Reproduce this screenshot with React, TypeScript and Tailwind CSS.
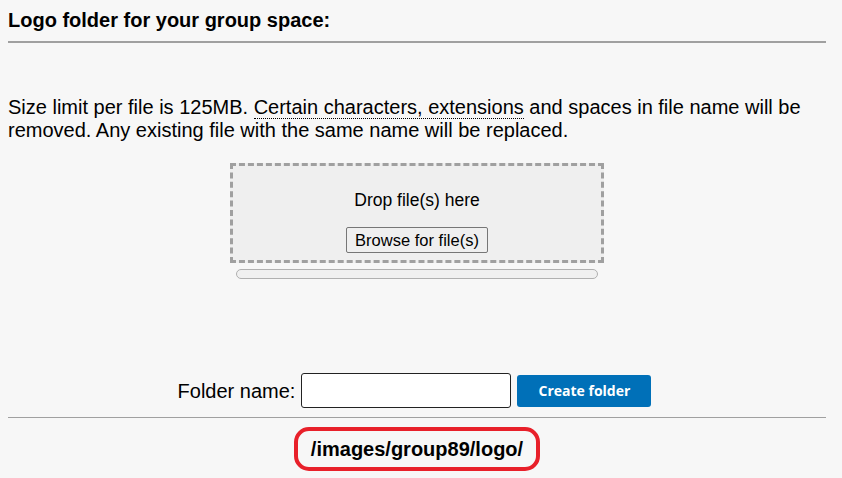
import React from "react";

export default function App() {
  return (
    <div className="min-h-[478px] w-[842px] bg-[#f7f7f7] text-black font-['Liberation_Sans',Arial,sans-serif]">
      <div className="ml-[8px] w-[818px]">
        <div className="pt-[9px] pb-[9px] text-[20px] font-bold leading-[23px]">Logo folder for your group space:</div>
        <div className="h-[2px] bg-[#a0a0a0]" />
        <p className="mt-[53px] text-[20px] leading-[23px]">
          Size limit per file is 125MB.{" "}
          <span className="border-b border-dotted border-black">Certain characters, extensions</span> and spaces in file name will be removed. Any existing file with the same name will be replaced.
        </p>
        <div className="mt-[21px] flex flex-col items-center">
          <div className="w-[374px] h-[100px] border-[3px] border-dashed border-[#a0a0a0] bg-[#efefef] flex flex-col items-center">
            <div className="mt-[24px] text-[17.5px] leading-[20px]">Drop file(s) here</div>
            <button className="mt-[17px] px-[8px] h-[26px] border border-[#767676] rounded-[2px] bg-[#efefef] text-[16.5px] leading-[20px] font-['Liberation_Sans',Arial,sans-serif]">
              Browse for file(s)
            </button>
          </div>
          <div className="mt-[6px] w-[362px] h-[10px] rounded-full border border-[#b0b0b0] bg-[#f0f0f0]" />
        </div>
        <div className="mt-[94px] pr-[5px] flex items-center justify-center gap-[6px]">
          <span className="text-[20px] leading-[22px]">Folder name:</span>
          <input className="w-[210px] h-[35px] border border-[#222] rounded-[3px] bg-white" />
          <button className="w-[134px] h-[32px] rounded-[3px] bg-[#0070b8] text-white text-[14px] font-bold font-['Open_Sans',sans-serif]">
            Create folder
          </button>
        </div>
        <div className="mt-[9px] h-[1px] bg-[#a0a0a0]" />
        <div className="mt-[9px] flex justify-center">
          <div className="w-[246px] h-[44px] border-[4px] border-[#e8202a] rounded-[15px] flex items-center justify-center text-[20px] font-bold">
            /images/group89/logo/
          </div>
        </div>
      </div>
    </div>
  );
}
